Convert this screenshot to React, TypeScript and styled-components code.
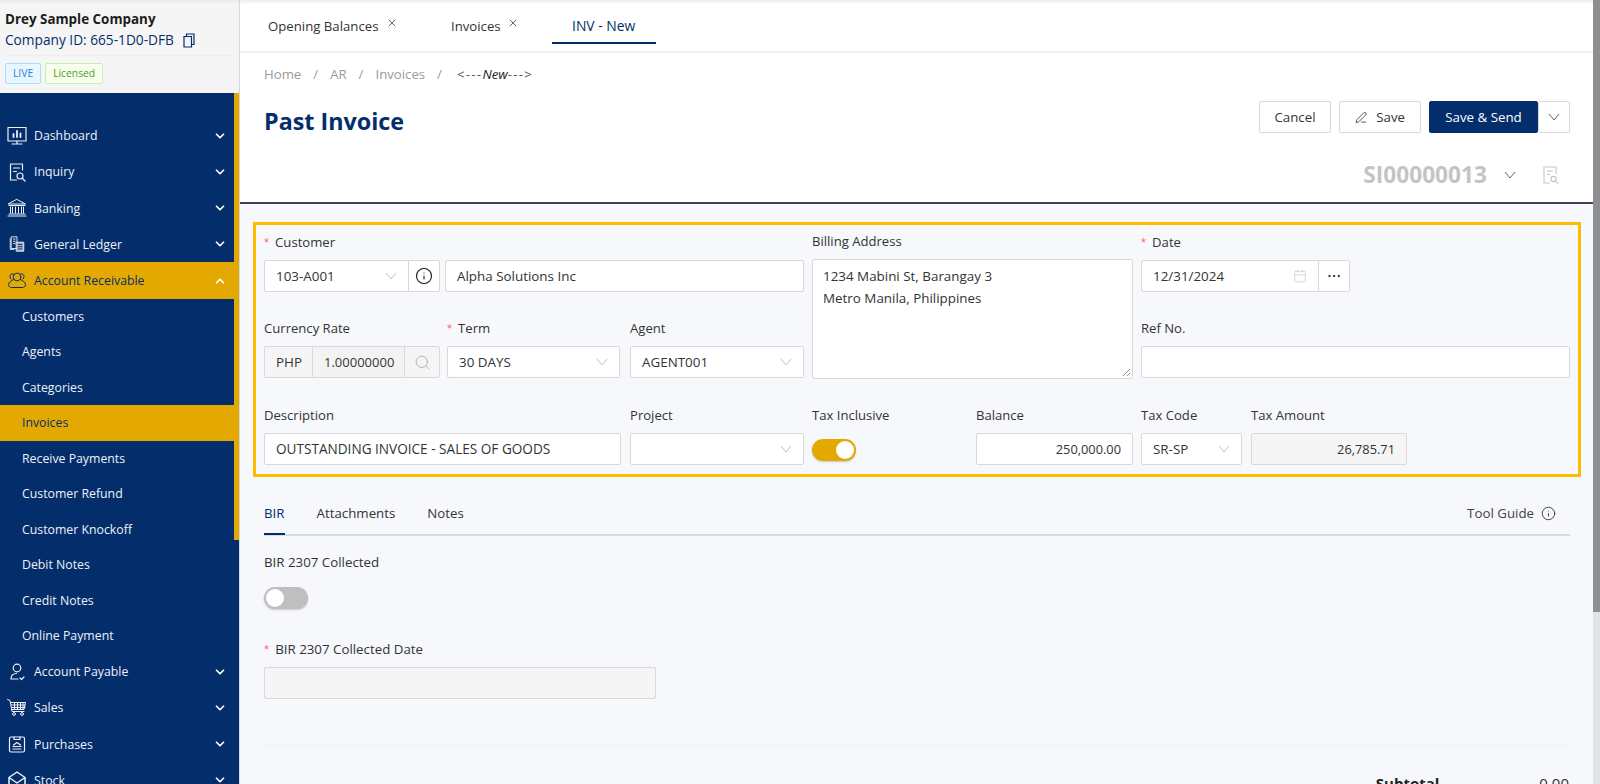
import React from "react";
import styled, { createGlobalStyle } from "styled-components";
import { ChevronDown, ChevronUp, Info, Search, Calendar, Ellipsis, X, PenLine } from "lucide-react";

const Global = createGlobalStyle`
  html, body { margin: 0; padding: 0; height: 100%; overflow: hidden; }
  body { font-family: "Open Sans", "Noto Sans", sans-serif; font-size: 13px; color: #333; }
  * { box-sizing: border-box; }
`;

const navy = "#042e6b";
const gold = "#e3a900";

const Page = styled.div`
  display: flex;
  width: 1600px;
  height: 784px;
  overflow: hidden;
`;

/* sidebar */
const Sidebar = styled.aside`
  width: 240px;
  flex: none;
  display: flex;
  flex-direction: column;
  border-right: 1px solid #d5d8e2;
`;

const Brand = styled.div`
  height: 93px;
  flex: none;
  background: #f5f5f5;
  padding: 9px 5px 0;
  box-shadow: inset 0 4px 4px -3px #e2e2e2;
`;

const CompanyName = styled.div`
  font-size: 13.4px;
  font-weight: 700;
  line-height: 20px;
  color: #1c1c1c;
`;

const CompanyId = styled.div`
  display: flex;
  align-items: center;
  gap: 9px;
  font-size: 13.7px;
  line-height: 22px;
  color: ${navy};
  padding-bottom: 4px;
  border-bottom: 1px solid #eeeeee;
`;

const Badges = styled.div`
  display: flex;
  gap: 4px;
  margin-top: 7px;
`;

const Badge = styled.span<{ $tone: "blue" | "green" }>`
  height: 21px;
  padding: 0 7px;
  border-radius: 2px;
  font-size: 10.3px;
  line-height: 19px;
  border: 1px solid ${(p) => (p.$tone === "blue" ? "#a9dcff" : "#c6f0a4")};
  background: ${(p) => (p.$tone === "blue" ? "#e8f6ff" : "#f6ffed")};
  color: ${(p) => (p.$tone === "blue" ? "#2f7fd6" : "#52a014")};
`;

const NavArea = styled.div`
  flex: 1;
  position: relative;
  background: ${navy};
  overflow: hidden;
  padding-top: 24.7px;
`;

const ScrollThumb = styled.div`
  position: absolute;
  top: 0;
  right: 0;
  width: 5px;
  height: 447px;
  background: ${gold};
`;

const NavRow = styled.div<{ $active?: boolean }>`
  display: flex;
  align-items: center;
  height: 36.2px;
  margin-right: 5px;
  padding: 0 7px 0 7px;
  font-size: 12.3px;
  color: ${(p) => (p.$active ? navy : "#eef1f7")};
  background: ${(p) => (p.$active ? gold : "transparent")};
  svg.chev {
    margin-left: auto;
    color: #fff;
  }
`;

const NavIconBox = styled.span`
  width: 20px;
  height: 20px;
  margin-right: 7px;
  display: flex;
  align-items: center;
  justify-content: center;
  flex: none;
`;

const SubRow = styled.div<{ $active?: boolean }>`
  display: flex;
  align-items: center;
  height: 35.5px;
  margin-right: 5px;
  padding-left: 22px;
  font-size: 12.3px;
  color: ${(p) => (p.$active ? navy : "#eef1f7")};
  background: ${(p) => (p.$active ? gold : "transparent")};
`;

/* main */
const Main = styled.main`
  flex: 1;
  min-width: 0;
  display: flex;
  flex-direction: column;
  position: relative;
  background: #f6f8fc;
`;

const TabBar = styled.div`
  height: 53px;
  flex: none;
  display: flex;
  background: #fff;
  border-bottom: 2px solid #f0f0f0;
  padding-left: 8px;
  box-shadow: inset 0 4px 4px -3px #e2e2e2;
`;

const TopTab = styled.div<{ $active?: boolean; $w: number; $gap?: number }>`
  width: ${(p) => p.$w}px;
  height: 44px;
  display: flex;
  align-items: flex-start;
  padding: 17px 0 0 20px;
  gap: ${(p) => p.$gap ?? 6}px;
  font-size: ${(p) => (p.$active ? 13.9 : 13.2)}px;
  line-height: 18px;
  color: ${(p) => (p.$active ? navy : "#333")};
  border-bottom: ${(p) => (p.$active ? `2px solid ${navy}` : "none")};
`;

const Header = styled.div`
  height: 151px;
  flex: none;
  background: #fff;
  border-bottom: 2px solid #3d4451;
  padding: 12px 0 0 24px;
`;

const Crumbs = styled.div`
  display: flex;
  gap: 12px;
  font-size: 13.2px;
  line-height: 18px;
  color: #9a9a9a;
`;

const CrumbCurrent = styled.span`
  color: #222;
  font-style: italic;
  margin-left: 3px;
`;

const CrumbDash = styled.span`
  font-style: normal;
  letter-spacing: 1.3px;
  color: #555;
`;

const TitleRow = styled.div`
  display: flex;
  align-items: flex-start;
  justify-content: space-between;
  padding-right: 30px;
  margin-top: 18px;
`;

const Title = styled.h1`
  margin: 4px 0 0;
  font-size: 23.3px;
  font-weight: 700;
  line-height: 32px;
  color: ${navy};
`;

const Actions = styled.div`
  display: flex;
  align-items: center;
`;

const Button = styled.button<{ $primary?: boolean }>`
  height: 32px;
  padding: 0 15px;
  display: flex;
  align-items: center;
  gap: 9px;
  font: inherit;
  font-size: 13.3px;
  border-radius: 2px;
  border: 1px solid ${(p) => (p.$primary ? navy : "#d9d9d9")};
  background: ${(p) => (p.$primary ? navy : "#fff")};
  color: ${(p) => (p.$primary ? "#fff" : "#333")};
`;

const CancelButton = styled(Button)`
  width: 72px;
  justify-content: center;
  margin-right: 8px;
`;

const SaveButton = styled(Button)`
  width: 82px;
  justify-content: center;
  margin-right: 8px;
  svg {
    color: #222;
  }
`;

const SendButton = styled(Button)`
  width: 109px;
  justify-content: center;
`;

const CaretButton = styled(Button)`
  width: 32px;
  padding: 0;
  justify-content: center;
  color: #666;
`;

const DocRow = styled.div`
  display: flex;
  align-items: center;
  justify-content: flex-end;
  padding-right: 41px;
  margin-top: 24px;
  color: #c4c4c4;
`;

const DocNumber = styled.span`
  font-size: 22.7px;
  font-weight: 700;
  line-height: 28px;
  margin-right: 17px;
`;

const DocCaret = styled.span`
  display: flex;
  color: #666;
  margin-right: 27px;
`;

const Body = styled.div`
  flex: 1;
  padding: 18px 19px 0 13px;
  position: relative;
  overflow: hidden;
`;

const Highlight = styled.section`
  width: 1328px;
  height: 255px;
  border: 3px solid #fdbc00;
  padding: 8px 8px 0;
  display: grid;
  grid-template-columns: 540px 321px 429px;
  grid-template-rows: 86px 87px 1fr;
  column-gap: 8px;
`;

const Field = styled.div<{ $w?: number }>`
  display: flex;
  flex-direction: column;
  ${(p) => (p.$w ? `width: ${p.$w}px;` : "")}
  && > * {
    flex: none;
  }
`;

const BillingField = styled(Field)`
  grid-column: 2;
  grid-row: 1 / 3;
`;

const Label = styled.label`
  height: 27px;
  font-size: 13.1px;
  line-height: 18px;
  color: #333;
  white-space: nowrap;
`;

const BillingLabel = styled(Label)`
  height: 26px;
  line-height: 16px;
`;

const Req = styled.span`
  color: #ff6b6b;
  margin-right: 6px;
  font-family: "Liberation Sans", sans-serif;
`;

const Controls = styled.div`
  display: flex;
`;

const inputBox = `
  height: 32px;
  border: 1px solid #d9d9d9;
  border-radius: 2px;
  background: #fff;
  font-size: 13.4px;
  line-height: 30px;
  color: #333;
  padding: 0 11px;
  white-space: nowrap;
`;

const TextBox = styled.div<{ $right?: boolean; $disabled?: boolean; $caps?: boolean }>`
  ${inputBox}
  flex: 1;
  font-size: ${(p) => (p.$right ? 12.8 : p.$caps ? 13.6 : 13.4)}px;
  text-align: ${(p) => (p.$right ? "right" : "left")};
  background: ${(p) => (p.$disabled ? "#f5f5f5" : "#fff")};
`;

const SelectBox = styled.div<{ $w?: number }>`
  ${inputBox}
  ${(p) => (p.$w ? `width: ${p.$w}px; flex: none;` : "flex: 1;")}
  display: flex;
  align-items: center;
  svg {
    margin-left: auto;
    color: #bfbfbf;
  }
`;

const AddonButton = styled.div<{ $muted?: boolean; $w?: number }>`
  width: ${(p) => p.$w ?? 32}px;
  height: 32px;
  flex: none;
  margin-left: -1px;
  display: flex;
  align-items: center;
  justify-content: center;
  border: 1px solid #d9d9d9;
  border-radius: 0 2px 2px 0;
  background: ${(p) => (p.$muted ? "#f5f5f5" : "#fff")};
  color: ${(p) => (p.$muted ? "#a8a8a8" : "#1a1a1a")};
`;

const CustomerControls = styled(Controls)`
  gap: 5px;
  align-items: flex-start;
`;

const InputGroup = styled.div`
  display: flex;
  flex: none;
`;

const Prefix = styled.div`
  ${inputBox}
  width: 48px;
  background: #f5f5f5;
  border-right: none;
  border-radius: 2px 0 0 2px;
`;

const RateBox = styled.div`
  ${inputBox}
  width: 93px;
  font-size: 13px;
  background: #f3f3f3;
  border-radius: 0;
  padding: 0 0 0 11px;
`;

const AddressBox = styled.div`
  position: relative;
  height: 120px;
  border: 1px solid #d9d9d9;
  border-radius: 2px;
  background: #fff;
  padding: 5px 10px;
  font-size: 13.4px;
  line-height: 22px;
  color: #333;
`;

const ResizeGrip = styled.svg`
  position: absolute;
  right: 1px;
  bottom: 1px;
`;

const RowTwo = styled.div`
  display: grid;
  grid-template-columns: 183px 183px 174px;
`;

const RowThree = styled.div`
  display: grid;
  grid-template-columns: 366px 174px;
`;

const MiddleRow = styled.div`
  display: grid;
  grid-template-columns: 164px 157px;
`;

const RightRow = styled.div`
  display: grid;
  grid-template-columns: 101px 156px;
  column-gap: 9px;
`;

const Toggle = styled.div<{ $on?: boolean }>`
  position: relative;
  width: 44px;
  height: 22px;
  margin-top: 6px;
  border-radius: 11px;
  background: ${(p) => (p.$on ? gold : "#bfbfbf")};
  box-shadow: 0 1px 2px rgba(0, 0, 0, 0.2);
  &::after {
    content: "";
    position: absolute;
    top: 2px;
    ${(p) => (p.$on ? "right: 2px;" : "left: 2px;")}
    width: 18px;
    height: 18px;
    border-radius: 50%;
    background: #fff;
  }
`;

const SubTabs = styled.div`
  margin: 19px 0 0 11px;
  width: 1306px;
  height: 40px;
  display: flex;
  align-items: flex-start;
  border-bottom: 2px solid #d8dade;
  gap: 32px;
`;

const SubTab = styled.div<{ $active?: boolean }>`
  height: 39px;
  padding-top: 8px;
  font-size: 13.3px;
  line-height: 18px;
  color: ${(p) => (p.$active ? navy : "#333")};
  border-bottom: ${(p) => (p.$active ? `2px solid ${navy}` : "none")};
`;

const ToolGuide = styled.div`
  margin-left: auto;
  padding: 8px 14px 0 0;
  display: flex;
  align-items: center;
  gap: 7px;
  font-size: 13.3px;
  line-height: 18px;
  color: #444;
  svg {
    color: #222;
  }
`;

const LowerSection = styled.div`
  margin-left: 11px;
  padding-top: 17px;
  width: 1306px;
`;

const LowerLabel = styled.div`
  font-size: 13.3px;
  line-height: 18px;
  color: #333;
`;

const LowerToggle = styled(Toggle)`
  margin-top: 16px;
`;

const DateLabel = styled(LowerLabel)`
  margin-top: 31px;
  margin-bottom: 8px;
`;

const DisabledDate = styled.div`
  width: 392px;
  height: 32px;
  border: 1px solid #d9d9d9;
  border-radius: 2px;
  background: #f5f5f5;
`;

const Divider = styled.div`
  margin-top: 46px;
  border-top: 1px solid #eef0f4;
`;

const Totals = styled.div`
  display: flex;
  justify-content: flex-end;
  gap: 100px;
  margin-top: 28px;
  font-size: 15px;
  line-height: 18px;
  padding-right: 1px;
  b {
    color: #222;
  }
`;

const PageScroll = styled.div`
  position: absolute;
  top: 0;
  bottom: 0;
  right: 0;
  width: 7px;
  background: #e2e3e7;
  &::before {
    content: "";
    display: block;
    height: 612px;
    background: #8d8f93;
  }
`;

const I = { fill: "none", stroke: "currentColor", strokeWidth: 1.2, strokeLinecap: "round", strokeLinejoin: "round" } as const;

const icons: Record<string, React.ReactNode> = {
  dashboard: (
    <svg width="20" height="20" viewBox="0 0 20 20" {...I}>
      <rect x="1" y="1.500" width="18" height="13.500" />
      <path d="M10 15v3M5 18h10" />
      <path d="M6.500 11V8M10 11V5M13.500 11V7.500" strokeWidth="1.800" />
    </svg>
  ),
  inquiry: (
    <svg width="20" height="20" viewBox="0 0 20 20" {...I}>
      <path d="M15.500 8V2h-12v16h6M6.500 6h6M6.500 9.500h3" />
      <circle cx="13" cy="14" r="3" />
      <path d="M15.500 16.500L18 19" />
    </svg>
  ),
  banking: (
    <svg width="20" height="20" viewBox="0 0 20 20" {...I} strokeWidth="1">
      <path d="M10 1.500L18.500 6H1.500zM2 7.500h16M3.500 9v6M5.500 9v6M8.500 9v6M11.500 9v6M14.500 9v6M16.500 9v6M2 16h16M1 18h18" />
    </svg>
  ),
  ledger: (
    <svg width="18" height="18" viewBox="0 0 20 20" {...I} strokeWidth="1">
      <path d="M4 2h6v13H4zM2.500 4v12h4M6 4.500h2M6 7h2M6 9.500h2" />
      <rect x="9.500" y="8" width="8" height="10" fill="#9fb0c8" />
      <path d="M11.500 10.500h4M11.500 13h4M11.500 15.500h4" stroke={navy} />
    </svg>
  ),
  receivable: (
    <svg width="20" height="20" viewBox="0 0 20 20" {...I} strokeWidth="1">
      <circle cx="10" cy="6" r="3.800" />
      <path d="M6.500 8.500C4 10 2 11 1.500 13.500c0 2 1.500 3 3 3h11c1.500 0 3-1 3-3-.5-2.500-2.500-3.500-5-5M7 3.500C5.500 2 3 3 3 5.500c0 1 .5 2 1 2.500M13 3.500C14.500 2 17 3 17 5.500c0 1-.5 2-1 2.500" />
    </svg>
  ),
  payable: (
    <svg width="20" height="20" viewBox="0 0 20 20" {...I}>
      <circle cx="10" cy="6" r="3.800" />
      <path d="M4 17c0-3.500 2-5.500 5.500-5.500M4 17h7M13 16l1.500 1.500L17 15" />
    </svg>
  ),
  sales: (
    <svg width="20" height="20" viewBox="0 0 20 20" {...I} strokeWidth="1">
      <path d="M0.500 1.500L3 2.500l2 11h12M4 4.500h14.500l-1.500 7H5M7.500 4.500v7M10.500 4.500v7M13.500 4.500v7M16 4.500v7M4.500 7h13.500M5 9.500h13" />
      <circle cx="7" cy="16" r="1.400" />
      <circle cx="15" cy="16" r="1.400" />
    </svg>
  ),
  purchases: (
    <svg width="20" height="20" viewBox="0 0 20 20" {...I}>
      <rect x="2.500" y="3" width="15" height="15" rx="1.500" />
      <path d="M7 3v2.500h6V3M6.500 11L10 8.500 13.500 11M6 12.500h8M6 15h8" />
    </svg>
  ),
  stock: (
    <svg width="20" height="20" viewBox="0 0 20 20" {...I} strokeWidth="1.500">
      <path d="M2 7.500L10 2l8 5.500V18H2zM2 7.500L10 13l8-5.500" />
    </svg>
  ),
};

const MainNav = ({ icon, label, active }: { icon: string; label: string; active?: boolean }) => (
  <NavRow $active={active}>
    <NavIconBox>{icons[icon]}</NavIconBox>
    {label}
    {active ? (
      <ChevronUp className="chev" size={14} strokeWidth={3} />
    ) : (
      <ChevronDown className="chev" size={14} strokeWidth={3} />
    )}
  </NavRow>
);

const subItems = [
  "Customers",
  "Agents",
  "Categories",
  "Invoices",
  "Receive Payments",
  "Customer Refund",
  "Customer Knockoff",
  "Debit Notes",
  "Credit Notes",
  "Online Payment",
];

const Caret = () => (
  <svg width="12" height="8" viewBox="0 0 12 8" fill="none" stroke="currentColor" strokeWidth="1">
    <path d="M1 1l5 6 5-6" />
  </svg>
);

const CopyIcon = () => (
  <svg width="12" height="15" viewBox="0 0 12 15" fill="none" stroke="currentColor" strokeWidth="1.200">
    <path d="M1 3.500h7.500V14H1zM3.500 3.500V1H11v10.500H8.500" />
  </svg>
);

const Select = ({ value, w }: { value?: string; w?: number }) => (
  <SelectBox $w={w}>
    {value}
    <Caret />
  </SelectBox>
);

export default function App() {
  return (
    <Page>
      <Global />
      <Sidebar>
        <Brand>
          <CompanyName>Drey Sample Company</CompanyName>
          <CompanyId>
            Company ID: 665-1D0-DFB
            <CopyIcon />
          </CompanyId>
          <Badges>
            <Badge $tone="blue">LIVE</Badge>
            <Badge $tone="green">Licensed</Badge>
          </Badges>
        </Brand>
        <NavArea>
          <ScrollThumb />
          <MainNav icon="dashboard" label="Dashboard" />
          <MainNav icon="inquiry" label="Inquiry" />
          <MainNav icon="banking" label="Banking" />
          <MainNav icon="ledger" label="General Ledger" />
          <MainNav icon="receivable" label="Account Receivable" active />
          {subItems.map((s) => (
            <SubRow key={s} $active={s === "Invoices"}>
              {s}
            </SubRow>
          ))}
          <MainNav icon="payable" label="Account Payable" />
          <MainNav icon="sales" label="Sales" />
          <MainNav icon="purchases" label="Purchases" />
          <MainNav icon="stock" label="Stock" />
        </NavArea>
      </Sidebar>

      <Main>
        <TabBar>
          <TopTab $w={183} $gap={8}>
            Opening Balances <X size={12} strokeWidth={1.5} />
          </TopTab>
          <TopTab $w={121}>
            Invoices <X size={12} strokeWidth={1.5} />
          </TopTab>
          <TopTab $w={104} $active>
            INV - New
          </TopTab>
        </TabBar>

        <Header>
          <Crumbs>
            <span>Home</span>
            <span>/</span>
            <span>AR</span>
            <span>/</span>
            <span>Invoices</span>
            <span>/</span>
            <CrumbCurrent>
              <CrumbDash>&lt;---</CrumbDash>New<CrumbDash>---&gt;</CrumbDash>
            </CrumbCurrent>
          </Crumbs>
          <TitleRow>
            <Title>Past Invoice</Title>
            <Actions>
              <CancelButton>Cancel</CancelButton>
              <SaveButton>
                <PenLine size={15} strokeWidth={1.5} />
                Save
              </SaveButton>
              <SendButton $primary>Save &amp; Send</SendButton>
              <CaretButton>
                <Caret />
              </CaretButton>
            </Actions>
          </TitleRow>
          <DocRow>
            <DocNumber>SI00000013</DocNumber>
            <DocCaret>
              <Caret />
            </DocCaret>
            <svg width="16" height="18" viewBox="0 0 16 18" fill="none" stroke="currentColor" strokeWidth="1.100">
              <path d="M13 8V1H1v16h6M4 5h6M4 8.500h3" />
              <circle cx="10.500" cy="13" r="2.600" />
              <path d="M12.500 15l2.500 2.500" />
            </svg>
          </DocRow>
        </Header>

        <Body>
          <Highlight>
            <Field>
              <Label>
                <Req>*</Req>Customer
              </Label>
              <CustomerControls>
                <InputGroup>
                  <Select value="103-A001" w={145} />
                  <AddonButton>
                    <Info size={18} strokeWidth={1.5} />
                  </AddonButton>
                </InputGroup>
                <TextBox>Alpha Solutions Inc</TextBox>
              </CustomerControls>
            </Field>
            <BillingField>
              <BillingLabel>Billing Address</BillingLabel>
              <AddressBox>
                1234 Mabini St, Barangay 3
                <br />
                Metro Manila, Philippines
                <ResizeGrip width="9" height="9" viewBox="0 0 9 9" stroke="#777" strokeWidth="0.800">
                  <path d="M1 8l7-7M5 8l3-3" />
                </ResizeGrip>
              </AddressBox>
            </BillingField>
            <Field>
              <Label>
                <Req>*</Req>Date
              </Label>
              <Controls>
                <SelectBox $w={178}>
                  12/31/2024
                  <Calendar size={14} strokeWidth={1} />
                </SelectBox>
                <AddonButton>
                  <Ellipsis size={16} strokeWidth={1.5} />
                </AddonButton>
              </Controls>
            </Field>

            <RowTwo>
              <Field>
                <Label>Currency Rate</Label>
                <InputGroup>
                  <Prefix>PHP</Prefix>
                  <RateBox>1.00000000</RateBox>
                  <AddonButton $muted $w={36}>
                    <Search size={17} strokeWidth={1.2} />
                  </AddonButton>
                </InputGroup>
              </Field>
              <Field $w={173}>
                <Label>
                  <Req>*</Req>Term
                </Label>
                <Select value="30 DAYS" />
              </Field>
              <Field>
                <Label>Agent</Label>
                <Select value="AGENT001" />
              </Field>
            </RowTwo>
            <Field>
              <Label>Ref No.</Label>
              <TextBox />
            </Field>

            <RowThree>
              <Field $w={357}>
                <Label>Description</Label>
                <TextBox $caps>OUTSTANDING INVOICE - SALES OF GOODS</TextBox>
              </Field>
              <Field>
                <Label>Project</Label>
                <Select />
              </Field>
            </RowThree>
            <MiddleRow>
              <Field>
                <Label>Tax Inclusive</Label>
                <Toggle $on />
              </Field>
              <Field>
                <Label>Balance</Label>
                <TextBox $right>250,000.00</TextBox>
              </Field>
            </MiddleRow>
            <RightRow>
              <Field>
                <Label>Tax Code</Label>
                <Select value="SR-SP" />
              </Field>
              <Field>
                <Label>Tax Amount</Label>
                <TextBox $right $disabled>
                  26,785.71
                </TextBox>
              </Field>
            </RightRow>
          </Highlight>

          <SubTabs>
            <SubTab $active>BIR</SubTab>
            <SubTab>Attachments</SubTab>
            <SubTab>Notes</SubTab>
            <ToolGuide>
              Tool Guide <Info size={15} strokeWidth={1.3} />
            </ToolGuide>
          </SubTabs>

          <LowerSection>
            <LowerLabel>BIR 2307 Collected</LowerLabel>
            <LowerToggle />
            <DateLabel>
              <Req>*</Req>BIR 2307 Collected Date
            </DateLabel>
            <DisabledDate />
            <Divider />
            <Totals>
              <b>Subtotal</b>
              <span>0.00</span>
            </Totals>
          </LowerSection>
        </Body>
        <PageScroll />
      </Main>
    </Page>
  );
}
